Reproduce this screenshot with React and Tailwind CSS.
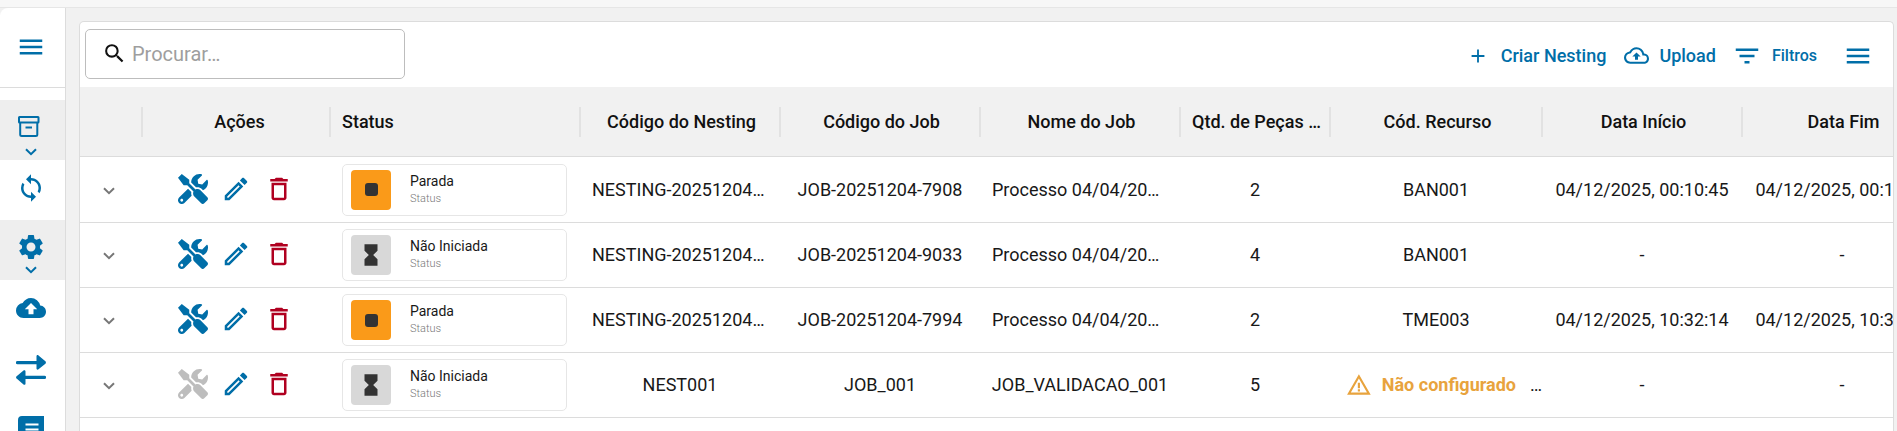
import React, { useState } from 'react';
import {
  MdMenu,
  MdSearch,
  MdSync,
  MdSettings,
  MdCloudUpload,
  MdOutlineBackup,
  MdFilterList,
  MdOutlineEdit,
  MdDeleteOutline,
  MdWarningAmber,
  MdHourglassFull,
  MdAdd,
} from 'react-icons/md';
import { FaTools } from 'react-icons/fa';

const columns = [
  { name: '', width: 'w-[62px]' },
  { name: 'Ações', width: 'w-[188px]', align: 'text-center pl-4' },
  { name: 'Status', width: 'w-[250px]', align: 'text-left pl-3' },
  { name: 'Código do Nesting', width: 'w-[200px]' },
  { name: 'Código do Job', width: 'w-[200px]' },
  { name: 'Nome do Job', width: 'w-[200px]' },
  { name: 'Qtd. de Peças …', width: 'w-[150px]' },
  { name: 'Cód. Recurso', width: 'w-[212px]' },
  { name: 'Data Início', width: 'w-[200px]' },
  { name: 'Data Fim', width: 'w-[200px]' },
];

const rows = [
  { id: 1, status: 'Parada', nesting: 'NESTING-20251204…', job: 'JOB-20251204-7908', nome: 'Processo 04/04/20…', qtd: 2, recurso: 'BAN001', inicio: '04/12/2025, 00:10:45', fim: '04/12/2025, 00:11:02' },
  { id: 2, status: 'Não Iniciada', nesting: 'NESTING-20251204…', job: 'JOB-20251204-9033', nome: 'Processo 04/04/20…', qtd: 4, recurso: 'BAN001', inicio: '-', fim: '-' },
  { id: 3, status: 'Parada', nesting: 'NESTING-20251204…', job: 'JOB-20251204-7994', nome: 'Processo 04/04/20…', qtd: 2, recurso: 'TME003', inicio: '04/12/2025, 10:32:14', fim: '04/12/2025, 10:32:40' },
  { id: 4, status: 'Não Iniciada', nesting: 'NEST001', job: 'JOB_001', nome: 'JOB_VALIDACAO_001', qtd: 5, recurso: null, inicio: '-', fim: '-', disabled: true },
];

function Chevron({ className }) {
  return (
    <svg className={className} width="12" height="8" viewBox="0 0 12 8" fill="none" stroke="currentColor" strokeWidth="2">
      <path d="M1 1.2 6 6.2 11 1.2" />
    </svg>
  );
}

function ArchiveIcon() {
  return (
    <svg className="mr-1" width="22" height="22" viewBox="0 0 22 22" fill="none" stroke="currentColor" strokeWidth="2" strokeLinejoin="round">
      <rect x="1" y="1" width="19.500" height="5.500" rx="0.500" />
      <path d="M2.200 7v11.500a1.500 1.500 0 0 0 1.500 1.500h14.100a1.500 1.500 0 0 0 1.500-1.500V7" />
      <path d="M7.500 11.500h6.500" />
    </svg>
  );
}

function SwapArrows() {
  return (
    <svg width="30" height="30" viewBox="0 0 30 30" fill="currentColor">
      <path d="M1.400 6H20.500V1.200C20.500 0.200 21.700-.3 22.500.4L29.400 6.300C30.100 7 30.100 8 29.400 8.700L22.500 14.300C21.700 15 20.500 14.600 20.500 13.500V9.200H1.400A1.600 1.600 0 0 1 1.400 6Z" />
      <path d="M28.600 20.800H9.500V16.400C9.500 15.300 8.300 15 7.500 15.600L.6 21.200C-.1 21.900-.1 22.900.6 23.600L7.500 29.500C8.300 30.200 9.500 29.800 9.500 28.700V24H28.600A1.600 1.600 0 0 0 28.600 20.800Z" />
    </svg>
  );
}

function NoteIcon() {
  return (
    <svg width="28" height="28" viewBox="0 0 28 28">
      <path d="M5 0H27V22H8L1 28V4A4 4 0 0 1 5 0Z" fill="currentColor" />
      <path d="M8.500 8.500H21.500M8.500 13.500H21.500" stroke="#fff" strokeWidth="2" />
    </svg>
  );
}

function Sidebar() {
  return (
    <aside className="w-[66px] shrink-0 bg-white border-r border-[#dcdcdc] rounded-tl-lg text-[#006ea8]">
      <div className="h-20 flex items-center justify-center border-b border-[#dcdcdc] pr-1 pb-0.5">
        <button aria-label="Menu">
          <MdMenu size={30} />
        </button>
      </div>
      <nav className="flex flex-col mt-3">
        <button aria-label="Cadastros" className="h-15 pt-4 pr-1 flex flex-col items-center gap-2.5 bg-[#eeeeee]">
          <ArchiveIcon />
          <Chevron />
        </button>
        <button aria-label="Sincronizar" className="h-15 pr-1 pb-1 flex items-center justify-center">
          <MdSync size={30} />
        </button>
        <button aria-label="Configurações" className="h-15 pt-3 pr-1 flex flex-col items-center bg-[#eeeeee]">
          <MdSettings size={30} />
          <Chevron className="mt-1" />
        </button>
        <button aria-label="Enviar" className="h-15 pr-1 pb-1 flex items-center justify-center">
          <MdCloudUpload size={30} />
        </button>
        <button aria-label="Transferir" className="h-15 pr-1 flex items-center justify-center">
          <SwapArrows />
        </button>
        <button aria-label="Mensagens" className="h-15 pr-1 flex items-center justify-center">
          <NoteIcon />
        </button>
      </nav>
    </aside>
  );
}

function Toolbar() {
  const [search, setSearch] = useState('');

  return (
    <div className="flex items-center justify-between pl-[5px] pr-5 pb-0.5 h-[65px]">
      <label className="flex items-center w-80 h-[50px] border border-[#bdbdbd] rounded-[5px] pl-4">
        <MdSearch size={25} className="shrink-0 text-[#111111]" />
        <input
          value={search}
          onChange={(e) => setSearch(e.target.value)}
          aria-label="Procurar"
          placeholder="Procurar…"
          className="w-full pl-[5px] text-xl placeholder:text-[#9e9e9e] focus:outline-none"
        />
      </label>
      <div className="flex items-center text-[#006ea8] font-medium text-lg pt-1">
        <button className="flex items-center gap-3">
          <MdAdd size={22} />
          Criar Nesting
        </button>
        <button className="flex items-center gap-2.5 ml-[18px]">
          <MdOutlineBackup size={25} />
          Upload
        </button>
        <button className="flex items-center gap-2.5 ml-4 text-base">
          <MdFilterList size={30} />
          Filtros
        </button>
        <button aria-label="Opções" className="ml-[26px]">
          <MdMenu size={30} />
        </button>
      </div>
    </div>
  );
}

function StatusCard({ status }) {
  const stopped = status === 'Parada';
  return (
    <div className="flex items-center h-[52px] w-[225px] border border-[#e6e6e6] rounded-[5px] pl-2">
      <div className={`size-10 rounded flex items-center justify-center text-[#333333] ${stopped ? 'bg-[#fa9a19]' : 'bg-[#d8d8d8]'}`}>
        {stopped ? <span className="size-[13px] rounded-[3px] bg-[#333333]" /> : <MdHourglassFull size={26} />}
      </div>
      <div className="ml-[19px] text-left">
        <p className="text-sm leading-[18px]">{status}</p>
        <p className="text-[11px] leading-[18px] font-light text-[#777777]">Status</p>
      </div>
    </div>
  );
}

function App() {
  return (
    <div className="min-h-screen bg-[#f7f7f7] pt-[7px] font-[Roboto,sans-serif] text-[#181818]">
      <div className="flex h-[calc(100vh-7px)] border-t border-[#e6e6e6] bg-[#f1f1f1] overflow-hidden">
        <Sidebar />
        <main className="flex-1 min-w-0 pt-[13px] pl-[13px] pr-[3px]">
          <div className="h-full bg-white border border-b-0 border-[#dcdcdc] rounded-t-[5px] overflow-hidden">
            <Toolbar />
            <table className="table-fixed w-[1862px] border-separate border-spacing-0 text-lg">
              <thead>
                <tr className="bg-[#f1f1f1] text-[#111111]">
                  {columns.map((col) => (
                    <th key={col.name} className={`${col.width} h-[70px] p-0 border-b border-[#dcdcdc] font-medium`}>
                      <div className={`h-[30px] leading-[30px] pr-2 -mr-px border-r-2 border-[#e2e2e2] whitespace-nowrap ${col.align || 'text-center pl-3'}`}>
                        {col.name}
                      </div>
                    </th>
                  ))}
                </tr>
              </thead>
              <tbody className="[&_td]:border-b [&_td]:border-[#dcdcdc]">
                {rows.map((row) => (
                  <tr key={row.id} className="h-[65px] first:h-[66px] text-center whitespace-nowrap">
                    <td className="pr-1">
                      <button aria-label="Expandir" className="text-[#777777] align-middle">
                        <Chevron />
                      </button>
                    </td>
                    <td>
                      <div className="flex items-center gap-[13px] pl-9 pb-0.5">
                        <button aria-label="Ferramentas" disabled={row.disabled} className="text-[#006ea8] disabled:text-[#bdbdbd]">
                          <FaTools size={30} />
                        </button>
                        <button aria-label="Editar" className="text-[#006ea8]">
                          <MdOutlineEdit size={30} />
                        </button>
                        <button aria-label="Excluir" className="text-[#b00020]">
                          <MdDeleteOutline size={30} />
                        </button>
                      </div>
                    </td>
                    <td className="pl-3">
                      <StatusCard status={row.status} />
                    </td>
                    <td className={row.nesting.endsWith('…') ? 'pl-3 text-left' : 'px-2'}>{row.nesting}</td>
                    <td className="px-2">{row.job}</td>
                    <td className={row.nome.endsWith('…') ? 'pl-3 text-left' : 'px-2'}>{row.nome}</td>
                    <td className="px-2">{row.qtd}</td>
                    <td>
                      {row.recurso || (
                        <div className="flex items-center pl-4">
                          <MdWarningAmber size={26} className="text-[#e8a33d]" />
                          <span className="ml-2.5 font-bold text-[#e8a33d]">Não configurado</span>
                          <span className="ml-3.5">…</span>
                        </div>
                      )}
                    </td>
                    <td className="px-2">{row.inicio}</td>
                    <td className="px-2">{row.fim}</td>
                  </tr>
                ))}
              </tbody>
            </table>
          </div>
        </main>
      </div>
    </div>
  );
}

export default App;
